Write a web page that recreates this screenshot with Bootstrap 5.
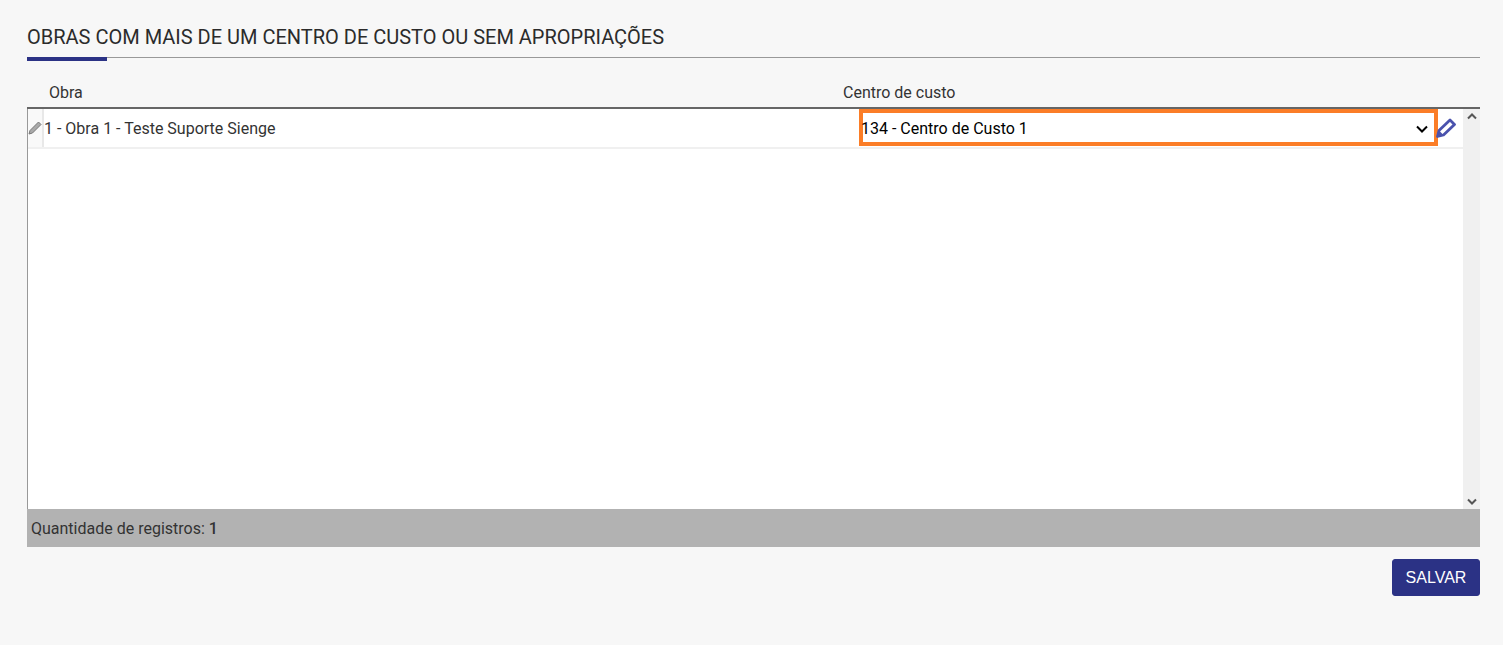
<!DOCTYPE html>
<html lang="pt-BR">
<head>
    <meta charset="UTF-8">
    <meta name="viewport" content="width=device-width, initial-scale=1.0">
    <title>Obras</title>
    <link rel="stylesheet" href="https://cdn.jsdelivr.net/npm/bootstrap@5.3.0/dist/css/bootstrap.min.css">
    <style>
        body {
            background-color: #f7f7f7;
            font-family: Roboto, sans-serif;
            color: #333;
            font-size: 16px;
        }
        .page-wrap {
            padding: 27px 23px 0 27px;
        }
        .page-title {
            font-size: 20px;
            font-weight: 400;
            line-height: 21px;
            color: #2b2b2b;
            margin: 0;
            padding-bottom: 9px;
            border-bottom: 1px solid #999;
            position: relative;
        }
        .page-title::after {
            content: "";
            position: absolute;
            left: 0;
            top: 30px;
            width: 80px;
            height: 4px;
            background: #2b3285;
        }
        .grid-head {
            height: 51px;
            padding-top: 26px;
            line-height: 18px;
            border-bottom: 2px solid #666;
        }
        .head-obra {
            width: 816px;
            padding-left: 22px;
        }
        .grid-wrap {
            height: 400px;
            background: #fff;
            border-left: 1px solid #999;
        }
        .grid-body {
            flex: 1;
            min-width: 0;
        }
        .grid-row {
            height: 40px;
            border-bottom: 2px solid #f0f0f0;
        }
        .cell-edit {
            width: 16px;
            height: 38px;
            background: #f9f9f9;
            border-right: 2px solid #e8e8e8;
        }
        .cell-obra {
            width: 815px;
            line-height: 39px;
        }
        .combo-box {
            width: 579px;
            height: 37px;
            margin-bottom: 1px;
            border: 4px solid #fb7d27;
            color: #000;
            padding: 2px 6px 0 0;
            background: #fff;
        }
        .combo-text {
            margin-left: -2px;
        }
        .cell-pick {
            width: 25px;
        }
        .cell-pick svg {
            margin-left: -2px;
        }
        .scroll-col {
            width: 17px;
            background: #f0f0f0;
        }
        .grid-foot {
            height: 38px;
            background: #b2b2b2;
            padding: 2px 0 0 4px;
        }
        .grid-foot b {
            font-weight: 500;
        }
        .btn-salvar {
            width: 88px;
            height: 37px;
            margin-top: 12px;
            padding: 0;
            background: #2b3285;
            border-color: #2b3285;
            border-radius: 3px;
            color: #fff;
            font-family: "Liberation Sans", sans-serif;
            font-size: 16px;
        }
        .btn-salvar:hover {
            background: #2b3285;
            color: #fff;
        }
    </style>
</head>
<body>
    <div class="page-wrap">
        <h1 class="page-title">OBRAS COM MAIS DE UM CENTRO DE CUSTO OU SEM APROPRIAÇÕES</h1>

        <div class="grid-head d-flex">
            <div class="head-obra">Obra</div>
            <div>Centro de custo</div>
        </div>

        <div class="grid-wrap d-flex">
            <div class="grid-body">
                <div class="grid-row d-flex align-items-center">
                    <div class="cell-edit d-flex align-items-center justify-content-center">
                        <svg width="14" height="14" viewBox="0 0 14 14">
                            <path d="M10.5 1 L13 3.5 L4.5 12 L1 13 L2 9.5 Z" fill="#aaa" stroke="#777" stroke-width="1"/>
                        </svg>
                    </div>
                    <div class="cell-obra">1 - Obra 1 - Teste Suporte Sienge</div>
                    <div class="combo-box d-flex align-items-center justify-content-between">
                        <span class="combo-text">134 - Centro de Custo 1</span>
                        <svg width="12" height="8" viewBox="0 0 12 8">
                            <path d="M1 1.5 L6 6.5 L11 1.5" fill="none" stroke="#000" stroke-width="2"/>
                        </svg>
                    </div>
                    <div class="cell-pick d-flex">
                        <svg width="20" height="20" viewBox="0 0 20 20">
                            <path d="M14 2 L18.5 6.5 L7.5 17 L1.5 18.5 L3 12.5 Z" fill="#fff" stroke="#4a52ad" stroke-width="2.8" stroke-linejoin="round"/>
                            <path d="M1.5 18.5 L3 12.5 L7.5 17 Z" fill="#4a52ad"/>
                        </svg>
                    </div>
                </div>
            </div>
            <div class="scroll-col d-flex flex-column justify-content-between align-items-center py-1">
                <svg width="10" height="7" viewBox="0 0 10 7"><path d="M1 5.5 L5 1.5 L9 5.5" fill="none" stroke="#555" stroke-width="2"/></svg>
                <svg width="10" height="7" viewBox="0 0 10 7"><path d="M1 1.5 L5 5.5 L9 1.5" fill="none" stroke="#555" stroke-width="2"/></svg>
            </div>
        </div>

        <div class="grid-foot d-flex align-items-center">
            <span>Quantidade de registros: <b>1</b></span>
        </div>

        <div class="d-flex justify-content-end">
            <button type="button" class="btn btn-salvar">SALVAR</button>
        </div>
    </div>
    <script src="https://cdn.jsdelivr.net/npm/bootstrap@5.3.0/dist/js/bootstrap.bundle.min.js"></script>
</body>
</html>
